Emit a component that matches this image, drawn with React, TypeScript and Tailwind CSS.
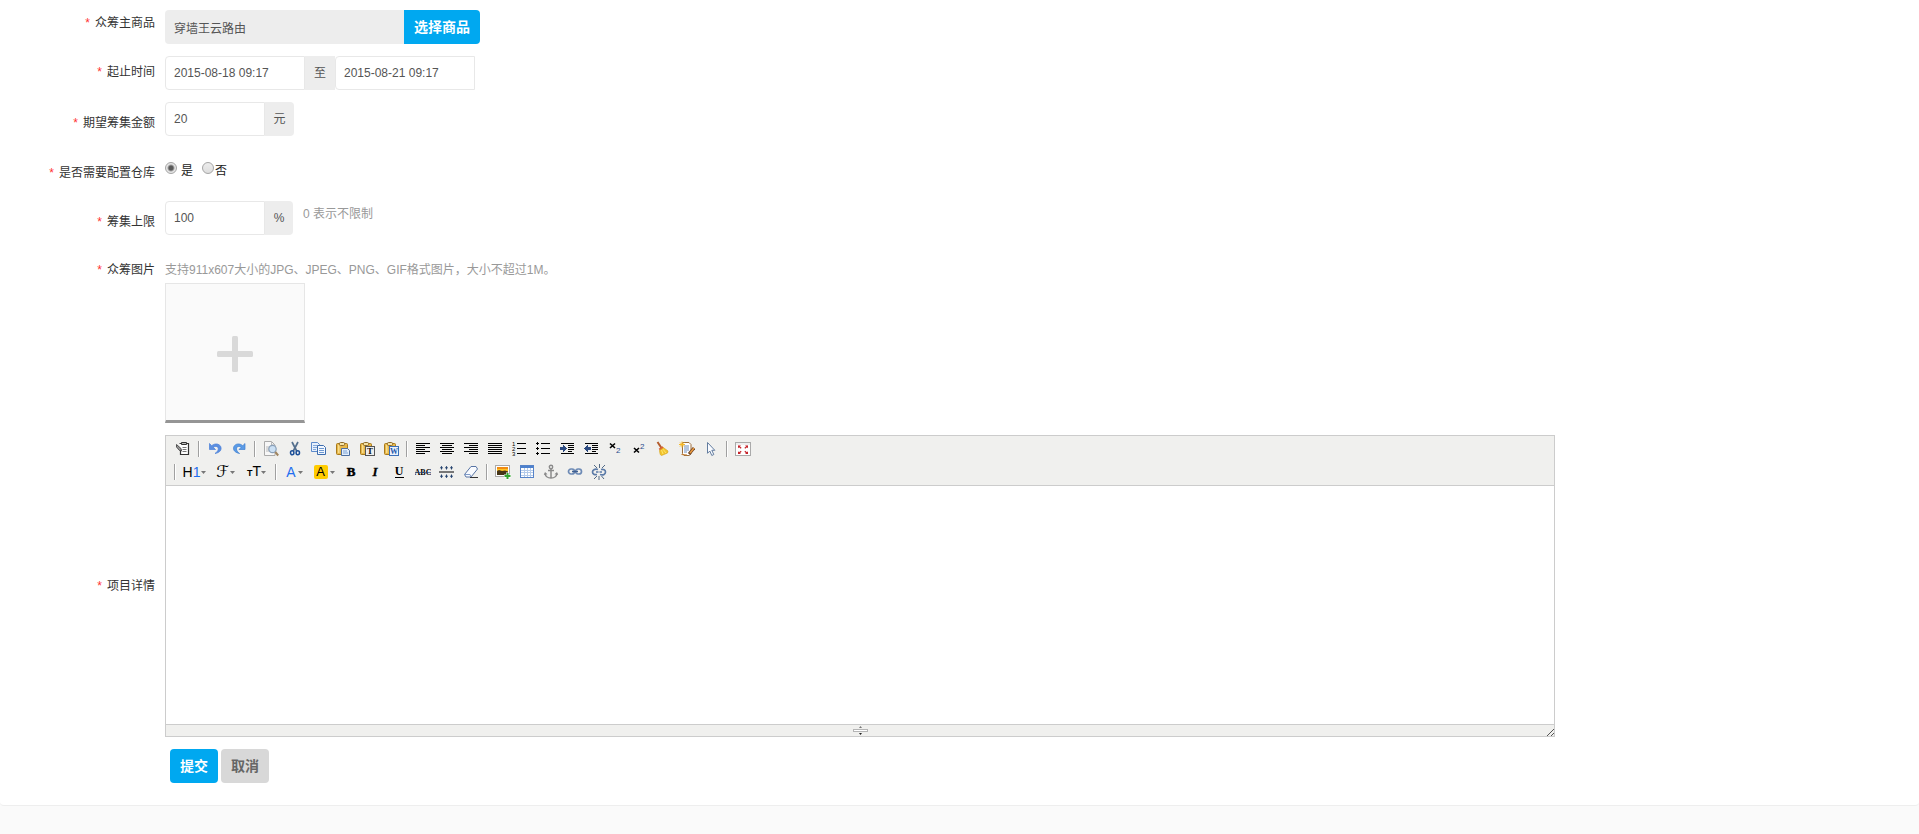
import type { ReactNode } from 'react';

const inputClass =
  'h-[34px] min-w-0 border border-[#e8e8e8] bg-white px-2 text-xs text-[#555] outline-none';
const addonClass = 'flex h-[34px] items-center justify-center bg-[#ededed] text-xs text-[#555]';
const radioClass =
  'size-3 shrink-0 appearance-none rounded-full border border-[#a5a5a5] bg-linear-to-b from-[#ededed] to-[#dedede] checked:bg-[radial-gradient(circle,#5a5a5a_0_2px,#e6e6e6_4px)]';

type FieldProps = {
  label: string;
  htmlFor?: string;
  className?: string;
  labelClass?: string;
  children: ReactNode;
};

function Field({ label, htmlFor, className = '', labelClass = '', children }: FieldProps) {
  return (
    <div className={`flex ${className}`}>
      <label
        htmlFor={htmlFor}
        className={`w-[155px] shrink-0 text-right text-xs leading-5 text-[#333] ${labelClass}`}
      >
        <span className="mr-[5px] text-[#f33]">*</span>
        {label}
      </label>
      <div className="ml-2.5 min-w-0 flex-1">{children}</div>
    </div>
  );
}

function Icon({ children, crisp = false }: { children: ReactNode; crisp?: boolean }) {
  return (
    <svg
      width="16"
      height="16"
      viewBox="0 0 16 16"
      fill="none"
      shapeRendering={crisp ? 'crispEdges' : 'auto'}
      className="shrink-0"
    >
      {children}
    </svg>
  );
}

function Caret() {
  return (
    <svg width="5" height="3" viewBox="0 0 5 3" className="shrink-0">
      <path d="M0 0h5L2.5 3z" fill="#777" />
    </svg>
  );
}

function Tool({ label, className = 'w-6 justify-center', children }: { label: string; className?: string; children: ReactNode }) {
  return (
    <button type="button" aria-label={label} className={`flex h-6 items-center ${className}`}>
      {children}
    </button>
  );
}

function Separator() {
  return <span className="mx-[3px] my-1 h-4 w-0.5 border-l border-r border-l-[#a0a0a0] border-r-white" />;
}

const clipboardBase = (
  <>
    <rect x="1.5" y="2.5" width="11" height="11" rx="1" fill="#e8b84a" stroke="#a87a1c" />
    <path d="M3 4h1.500v8H3z" fill="#f8dd8c" />
    <rect x="4.500" y="1.500" width="5" height="3" rx="1" fill="#f5e3a8" stroke="#8d6a2a" />
  </>
);

const icons = {
  source: (
    <Icon>
      <path d="M4.500 2.500h9v11h-8" fill="#fff" />
      <path d="M4.500 2.500h9v11h-8V8" stroke="#333" strokeWidth="1.200" />
      <path d="M6.500 3.500v-2h5v2z" fill="#bbb" stroke="#333" />
      <path d="M7.500 6.500h4M7.500 8.500h4M7.500 10.500h4" stroke="#777" />
      <path d="M1.500 3.500l4.500 4 .5 2.500-2-.5L1.500 6z" fill="#999" stroke="#333" strokeWidth=".8" />
    </Icon>
  ),
  undo: (
    <Icon>
      <path d="M2.500 2.500v6h6L6.300 6.300C8.500 4.600 11.500 5.500 11.300 8c-.1 1.700-1.400 3-3.300 4.500 4-.7 6.200-2.700 6.100-5.300C14 3.200 8.500 1.300 4.700 4.700z" fill="#5b8fe0" stroke="#4a80d8" strokeWidth=".7" />
    </Icon>
  ),
  redo: (
    <Icon>
      <path d="M14 2.500v6H8l2.200-2.200C8 4.600 5.300 5.500 5.500 8c.1 1.700 1.200 3 3.100 4.500-3.800-.7-6.200-2.700-6.100-5.300C2.600 3.200 8 1.300 11.800 4.700z" fill="#5b9be6" stroke="#3f80d0" strokeWidth=".7" />
    </Icon>
  ),
  preview: (
    <Icon>
      <path d="M1.500.5h7l3.500 3.500v10.500H1.500z" fill="#f7f7f7" stroke="#aaa" />
      <path d="M8.500.5V4H12M3 6h4M3 8h3M3 10h3" stroke="#bbb" />
      <circle cx="9.500" cy="8" r="3.700" fill="#cbe0f4" stroke="#8aa0b8" strokeWidth="1.200" />
      <path d="M12.300 11l2.900 3.500" stroke="#a08560" strokeWidth="2" />
    </Icon>
  ),
  cut: (
    <Icon>
      <path d="M5 1l4.700 9M11 1L6.300 10" stroke="#55708e" strokeWidth="1.700" />
      <ellipse cx="5.200" cy="11.800" rx="1.700" ry="2" stroke="#1c4f98" strokeWidth="1.500" />
      <ellipse cx="10.800" cy="11.800" rx="1.700" ry="2" stroke="#1c4f98" strokeWidth="1.500" />
    </Icon>
  ),
  copy: (
    <Icon>
      <path d="M.500 1.500h6l2 2v7h-8z" fill="#e7f0fc" stroke="#5c8acb" />
      <path d="M2 4.500h4M2 6.500h4M2 8.500h3" stroke="#84a9da" />
      <path d="M6.500 4.500h6l2 2v7h-8z" fill="#f2f7fe" stroke="#3c6cae" />
      <path d="M8 7.500h5M8 9.500h5M8 11.500h5" stroke="#6d98d0" />
    </Icon>
  ),
  paste: (
    <Icon>
      {clipboardBase}
      <path d="M6.500 7.500h6l2 2v5h-8z" fill="#e3eefb" stroke="#4e6f9f" />
      <path d="M8 10h4M8 12h5" stroke="#7ea4d5" />
    </Icon>
  ),
  pasteText: (
    <Icon>
      {clipboardBase}
      <rect x="6.500" y="5.500" width="9" height="9" fill="#eee" stroke="#555" />
      <text x="11" y="13" textAnchor="middle" fontSize="9" fontWeight="700" fontFamily="Liberation Serif, serif" fill="#111">T</text>
    </Icon>
  ),
  pasteWord: (
    <Icon>
      {clipboardBase}
      <rect x="6.500" y="5.500" width="9" height="9" fill="#eaf2fc" stroke="#3c70b8" />
      <text x="11" y="13" textAnchor="middle" fontSize="8" fontWeight="700" fontFamily="Liberation Serif, serif" fill="#1f5aac">W</text>
    </Icon>
  ),
  left: <Icon crisp><path d="M1 2.500h14M1 4.500h9M1 6.500h14M1 8.500h9M1 10.500h14M1 12.500h9" stroke="#000" /></Icon>,
  center: <Icon crisp><path d="M1 2.500h14M3 4.500h10M1 6.500h14M3 8.500h10M1 10.500h14M3 12.500h10" stroke="#000" /></Icon>,
  right: <Icon crisp><path d="M1 2.500h14M6 4.500h9M1 6.500h14M6 8.500h9M1 10.500h14M6 12.500h9" stroke="#000" /></Icon>,
  justify: <Icon crisp><path d="M1 2.500h14M1 4.500h14M1 6.500h14M1 8.500h14M1 10.500h14M1 12.500h14" stroke="#000" /></Icon>,
  ordered: (
    <Icon crisp>
      <path d="M6 2.500h9M6 7.500h9M6 12.500h9" stroke="#000" />
      <g fontSize="6" fontFamily="Liberation Sans, sans-serif" fill="#000">
        <text x="1" y="5">1</text>
        <text x="1" y="10">2</text>
        <text x="1" y="15">3</text>
      </g>
    </Icon>
  ),
  unordered: (
    <Icon crisp>
      <path d="M6 2.500h9M6 7.500h9M6 12.500h9" stroke="#000" />
      <path d="M1 2.500h3M1 7.500h3M1 12.500h3M2.500 1v3M2.500 6v3M2.500 11v3" stroke="#000" />
    </Icon>
  ),
  indent: (
    <Icon crisp>
      <path d="M2 2.500h13M9 4.500h6M9 6.500h6M9 8.500h6M9 10.500h4M2 12.500h13" stroke="#000" />
      <path d="M1 6h3V4l4 3.500L4 11V9H1z" fill="#2c4a80" />
    </Icon>
  ),
  outdent: (
    <Icon crisp>
      <path d="M2 2.500h13M9 4.500h6M9 6.500h6M9 8.500h6M9 10.500h4M2 12.500h13" stroke="#000" />
      <path d="M8 6H5V4L1 7.500 5 11V9h3z" fill="#2c4a80" />
    </Icon>
  ),
  sub: (
    <Icon>
      <path d="M3 2.500L8 7M8 2.500L3 7" stroke="#000" strokeWidth="1.600" />
      <text x="9" y="12" fontSize="8" fontFamily="Liberation Sans, sans-serif" fill="#264d8c">2</text>
    </Icon>
  ),
  sup: (
    <Icon>
      <path d="M3 7l5 4.500M8 7l-5 4.500" stroke="#000" strokeWidth="1.600" />
      <text x="9" y="8" fontSize="8" fontFamily="Liberation Sans, sans-serif" fill="#264d8c">2</text>
    </Icon>
  ),
  clear: (
    <Icon>
      <path d="M2.500 1l4 6" stroke="#b45c2d" strokeWidth="2" />
      <path d="M3.700 7.700L7.500 5.200l1.500 2-3.800 2.500z" fill="#d95d35" />
      <path d="M4.500 9.500l4-2.800 4.500 3.300-.5 2-6 2.500-1.300-1z" fill="#f3c52c" stroke="#d8a820" strokeWidth=".7" />
      <path d="M6.500 9L8 13M8 8.200l3 3.800" stroke="#fff08b" strokeWidth=".7" />
    </Icon>
  ),
  quickFormat: (
    <Icon>
      <path d="M3.500 1.500H10l2 2v9.500l-2 1.500H5l-1.500-2z" fill="#fff" stroke="#9c6d3b" />
      <path d="M5 5h5M5 7h5M5 9h5M5 11h3" stroke="#6b8dc0" />
      <path d="M0 3.500h6M3 .5v6M1 1.500l4 4M5 1.500l-4 4" stroke="#f6b927" />
      <path d="M15 7l-5 6" stroke="#6c452a" strokeWidth="3" />
      <path d="M15 7l-4 5" stroke="#ed9b3d" strokeWidth="1.500" />
      <path d="M2.500 13.500L8 14" stroke="#c07a31" />
    </Icon>
  ),
  select: (
    <Icon>
      <path d="M4.500 1.500v10.800l2.300-2.300 2 4.500 2-1-2-4.200h3z" fill="#f9fbff" stroke="#637d9f" />
    </Icon>
  ),
  fullscreen: (
    <Icon>
      <rect x=".5" y="1.500" width="15" height="13" fill="#fff" stroke="#aaa" />
      <path d="M1 3h14" stroke="#ddd" />
      <path d="M3 4.500h3L3 7.200zM13 4.500h-3l3 2.700zM3 13h3L3 10.300zM13 13h-3l3-2.700z" fill="#c5232a" />
      <path d="M3.500 5l2.700 2.300M12.500 5L9.800 7.300M3.500 12.500l2.700-2.300M12.500 12.500l-2.700-2.300" stroke="#c5232a" strokeWidth="1.200" />
    </Icon>
  ),
  bold: <Icon><text x="8" y="12" textAnchor="middle" fontSize="13" fontWeight="700" stroke="#000" strokeWidth=".5" fontFamily="Liberation Serif, serif" fill="#000">B</text></Icon>,
  italic: <Icon><text x="8" y="12" textAnchor="middle" fontSize="13" fontWeight="700" fontStyle="italic" stroke="#000" strokeWidth=".3" fontFamily="Liberation Serif, serif" fill="#000">I</text></Icon>,
  underline: (
    <Icon>
      <text x="8" y="11" textAnchor="middle" fontSize="12" fontWeight="700" fontFamily="Liberation Serif, serif" fill="#000">U</text>
      <path d="M4 13.500h9" stroke="#000" />
    </Icon>
  ),
  strike: (
    <Icon>
      <text x="8" y="11" textAnchor="middle" fontSize="8" fontWeight="700" fontFamily="Liberation Serif, serif" fill="#000">ABC</text>
      <path d="M0 8.500h16" stroke="#2c4a80" strokeOpacity=".7" />
    </Icon>
  ),
  lineHeight: (
    <Icon>
      <path d="M0 8h15" stroke="#777" strokeWidth="2" />
      <path d="M2.500 2.500v3M7.500 2.500v3M12.500 2.500v3M2.500 10.500v3M7.500 10.500v3M12.500 10.500v3" stroke="#27446f" />
      <path d="M.8 4.200L2.500 2l1.700 2.200zM5.800 4.200L7.500 2l1.700 2.200zM10.800 4.200L12.500 2l1.700 2.200zM.8 11.800L2.500 14l1.700-2.200zM5.800 11.800L7.500 14l1.700-2.200zM10.800 11.800L12.500 14l1.700-2.200z" fill="#27446f" />
    </Icon>
  ),
  eraser: (
    <Icon>
      <path d="M1.500 10.500l6.500-8h5l1.500 2.500-6.500 8H3z" fill="#f9fbff" stroke="#5875a5" />
      <path d="M1.500 10.500H7L8 13" stroke="#7f9bc8" />
      <path d="M7 13.500h8" stroke="#333" />
    </Icon>
  ),
  image: (
    <Icon>
      <rect x=".5" y="1.500" width="14" height="11" fill="#fff" stroke="#aaa" />
      <path d="M2 3h11v3H2z" fill="#f08b12" />
      <path d="M2 5h11v3H2z" fill="#ffc423" />
      <path d="M2 7l2-1 3 1 3-.5 3 1V11H2z" fill="#463517" />
      <path d="M12.500 8.500v7M9 12h7" stroke="#fff" strokeWidth="3" />
      <path d="M12.500 9v6M9.500 12h6" stroke="#30a52d" strokeWidth="2" />
    </Icon>
  ),
  table: (
    <Icon crisp>
      <rect x="1.500" y="1.500" width="13" height="12" fill="#fff" stroke="#5683c8" />
      <path d="M2 2h12v2H2z" fill="#4d81ce" />
      <path d="M2 6.500h12M2 8.500h12M2 11.500h12M5.500 4v9M8.500 4v9M11.500 4v9" stroke="#b4cbea" />
    </Icon>
  ),
  anchor: (
    <Icon>
      <circle cx="8" cy="3" r="1.700" stroke="#8a8a8a" strokeWidth="1.400" />
      <path d="M8 5v9M5 6.500h6M2 9.500c.5 3 3 4.500 6 4.500s5.500-1.500 6-4.500" stroke="#8a8a8a" strokeWidth="1.500" />
      <path d="M.8 11L2 8l2.500 2.300zM15.200 11L14 8l-2.500 2.300z" fill="#8a8a8a" />
    </Icon>
  ),
  link: (
    <Icon>
      <rect x="1.500" y="5" width="6" height="5" rx="2.500" stroke="#6d8ab5" strokeWidth="1.700" />
      <rect x="8.500" y="5" width="6" height="5" rx="2.500" stroke="#6d8ab5" strokeWidth="1.700" />
      <path d="M5 7.500h6" stroke="#3f5f90" strokeWidth="1.500" />
    </Icon>
  ),
  unlink: (
    <Icon>
      <path d="M7 5.500C3.500 4.500 1.500 6 1.500 8s2 3 4.500 2.500M5 8h2.500M9 10.500c3.500 1 5.500-.5 5.500-2.500s-2-3-4.500-2.500M11 8H8.500" stroke="#5c7ba8" strokeWidth="1.700" />
      <path d="M8.500 0v4M3 1l3 3M14 1l-3 3M8 12v4M3 15l3-3M13 15l-2.500-3" stroke="#526a85" />
    </Icon>
  ),
};

const groupedTools: [keyof typeof icons, string][][] = [
  [['source', 'HTML代码']],
  [['undo', '后退'], ['redo', '前进']],
  [['preview', '预览'], ['cut', '剪切'], ['copy', '复制'], ['paste', '粘贴'], ['pasteText', '粘贴为无格式文本'], ['pasteWord', '从Word粘贴']],
  [
    ['left', '左对齐'], ['center', '居中'], ['right', '右对齐'], ['justify', '两端对齐'],
    ['ordered', '编号'], ['unordered', '项目符号'], ['indent', '增加缩进'], ['outdent', '减少缩进'],
    ['sub', '下标'], ['sup', '上标'], ['clear', '清理HTML代码'], ['quickFormat', '一键排版'], ['select', '全选'],
  ],
  [['fullscreen', '全屏显示']],
];

const textTools: [keyof typeof icons, string][] = [
  ['bold', '粗体'], ['italic', '斜体'], ['underline', '下划线'],
  ['strike', '删除线'], ['lineHeight', '行距'], ['eraser', '删除格式'],
];

const insertTools: [keyof typeof icons, string][] = [
  ['image', '图片'], ['table', '表格'], ['anchor', '锚点'], ['link', '超级链接'], ['unlink', '取消超级链接'],
];

function Editor() {
  return (
    <div className="w-full max-w-[1390px] border border-[#ccc]">
      <div className="border-b border-[#ccc] bg-[#f0f0ee] px-[5px] py-px">
        <div className="flex flex-wrap">
          {groupedTools.map((group, i) => (
            <div key={i} className="flex">
              {i > 0 && <Separator />}
              {group.map(([name, label]) => (
                <Tool key={name} label={label}>{icons[name]}</Tool>
              ))}
            </div>
          ))}
        </div>
        <div className="-mt-px flex flex-wrap">
          <Separator />
          <Tool label="段落" className="w-[31px] justify-center gap-px">
            <span className="text-sm leading-4 text-black">H<span className="text-[#1e6ef0]">1</span></span>
            <Caret />
          </Tool>
          <Tool label="字体" className="w-[31px] justify-center gap-px">
            <span className="font-['DejaVu_Sans',sans-serif] text-base leading-4 text-black italic">ℱ</span>
            <Caret />
          </Tool>
          <Tool label="文字大小" className="w-[31px] justify-center">
            <span className="text-sm leading-4 text-black"><span className="text-[9px] font-bold">T</span>T</span>
            <Caret />
          </Tool>
          <Separator />
          <Tool label="文字颜色" className="w-[29px] justify-center gap-0.5">
            <span className="text-sm leading-4 text-[#1e6ef0]">A</span>
            <Caret />
          </Tool>
          <Tool label="文字背景" className="w-[30px] justify-center gap-0.5">
            <span className="size-3.5 rounded-xs bg-[#fc0] text-center text-[13px] leading-[14px] text-black">A</span>
            <Caret />
          </Tool>
          {textTools.map(([name, label]) => (
            <Tool key={name} label={label}>{icons[name]}</Tool>
          ))}
          <Separator />
          {insertTools.map(([name, label]) => (
            <Tool key={name} label={label}>{icons[name]}</Tool>
          ))}
        </div>
      </div>
      <textarea id="detail" className="block h-[238px] w-full resize-none bg-white p-1 text-xs outline-none" />
      <div className="relative flex h-3 items-center justify-center border-t border-[#ccc] bg-[#f0f0ee]">
        <svg width="15" height="9" viewBox="0 0 15 9">
          <path d="M6 2h3L7.500 0z" fill="#777" />
          <path d="M6 7h3L7.500 9z" fill="#222" />
          <rect x=".5" y="3.500" width="14" height="2" fill="#fff" stroke="#b5b5b5" />
        </svg>
        <svg width="8" height="8" viewBox="0 0 8 8" className="absolute right-0 bottom-0">
          <path d="M1 8l7-7M5 8l3-3" stroke="#555" />
        </svg>
      </div>
    </div>
  );
}

export default function App() {
  return (
    <div className="min-h-screen bg-[#fafafa] font-['Liberation_Sans','Noto_Sans_CJK_SC',sans-serif]">
      <form className="flex flex-col gap-3 rounded-b-sm border-b border-[#eee] bg-white pt-2.5 pb-[22px]">
        <Field label="众筹主商品" htmlFor="goods" labelClass="pt-[3px]">
          <div className="flex">
            <input id="goods" readOnly defaultValue="穿墙王云路由" className="h-[34px] w-[239px] rounded-l-sm bg-[#ededed] px-[9px] text-xs text-[#555] outline-none" />
            <button type="button" className="h-[34px] w-[76px] rounded-r-sm bg-[#00a8f0] text-sm font-bold text-white">选择商品</button>
          </div>
        </Field>

        <Field label="起止时间" htmlFor="start" labelClass="pt-1.5">
          <div className="flex">
            <input id="start" defaultValue="2015-08-18 09:17" className={`w-[140px] rounded-l-sm ${inputClass}`} />
            <label htmlFor="end" className={`w-[30px] ${addonClass}`}>至</label>
            <input id="end" defaultValue="2015-08-21 09:17" className={`w-[140px] rounded-l-sm ${inputClass}`} />
          </div>
        </Field>

        <Field label="期望筹集金额" htmlFor="amount" labelClass="pt-[11px]">
          <div className="flex">
            <input id="amount" defaultValue="20" className={`w-[100px] rounded-l-sm ${inputClass}`} />
            <span className={`w-[29px] rounded-r-sm ${addonClass}`}>元</span>
          </div>
        </Field>

        <Field label="是否需要配置仓库" className="h-[41px]" labelClass="pt-[15px]">
          <div className="flex pt-[13px] text-xs leading-5 text-[#222]">
            <label className="mr-[9px] flex gap-1">
              <input type="radio" name="depot" defaultChecked className={`mt-px ${radioClass}`} />
              是
            </label>
            <label className="flex gap-px">
              <input type="radio" name="depot" className={`mt-px ${radioClass}`} />
              否
            </label>
          </div>
        </Field>

        <Field label="筹集上限" htmlFor="limit" labelClass="pt-[11px]">
          <div className="flex">
            <input id="limit" defaultValue="100" className={`w-[100px] rounded-l-sm ${inputClass}`} />
            <span className={`w-7 rounded-r-sm ${addonClass}`}>%</span>
            <span className="ml-2.5 pt-[3px] text-xs leading-5 text-[#999]">0 表示不限制</span>
          </div>
        </Field>

        <Field label="众筹图片" htmlFor="picture" labelClass="pt-[13px]">
          <p className="pt-[13px] text-xs leading-5 text-[#999]">支持911x607大小的JPG、JPEG、PNG、GIF格式图片，大小不超过1M。</p>
          <button id="picture" type="button" aria-label="众筹图片" className="mt-[3px] flex size-[140px] items-center justify-center border border-b-3 border-[#e6e6e6] border-b-[#959595] bg-[#fafafa] pt-[3px]">
            <svg width="36" height="36" viewBox="0 0 36 36" fill="#d9d9d9">
              <rect x="15" width="6" height="36" rx="1.500" />
              <rect y="15" width="36" height="6" rx="1.500" />
            </svg>
          </button>
        </Field>

        <Field label="项目详情" htmlFor="detail" className="items-center">
          <Editor />
        </Field>

        <div className="ml-[170px] flex gap-[3px]">
          <button type="submit" className="h-[34px] w-12 rounded-sm bg-[#00a8f0] text-sm font-bold text-white">提交</button>
          <button type="button" className="h-[34px] w-12 rounded-sm bg-[#d8d8d8] text-sm font-bold text-[#666]">取消</button>
        </div>
      </form>
    </div>
  );
}
